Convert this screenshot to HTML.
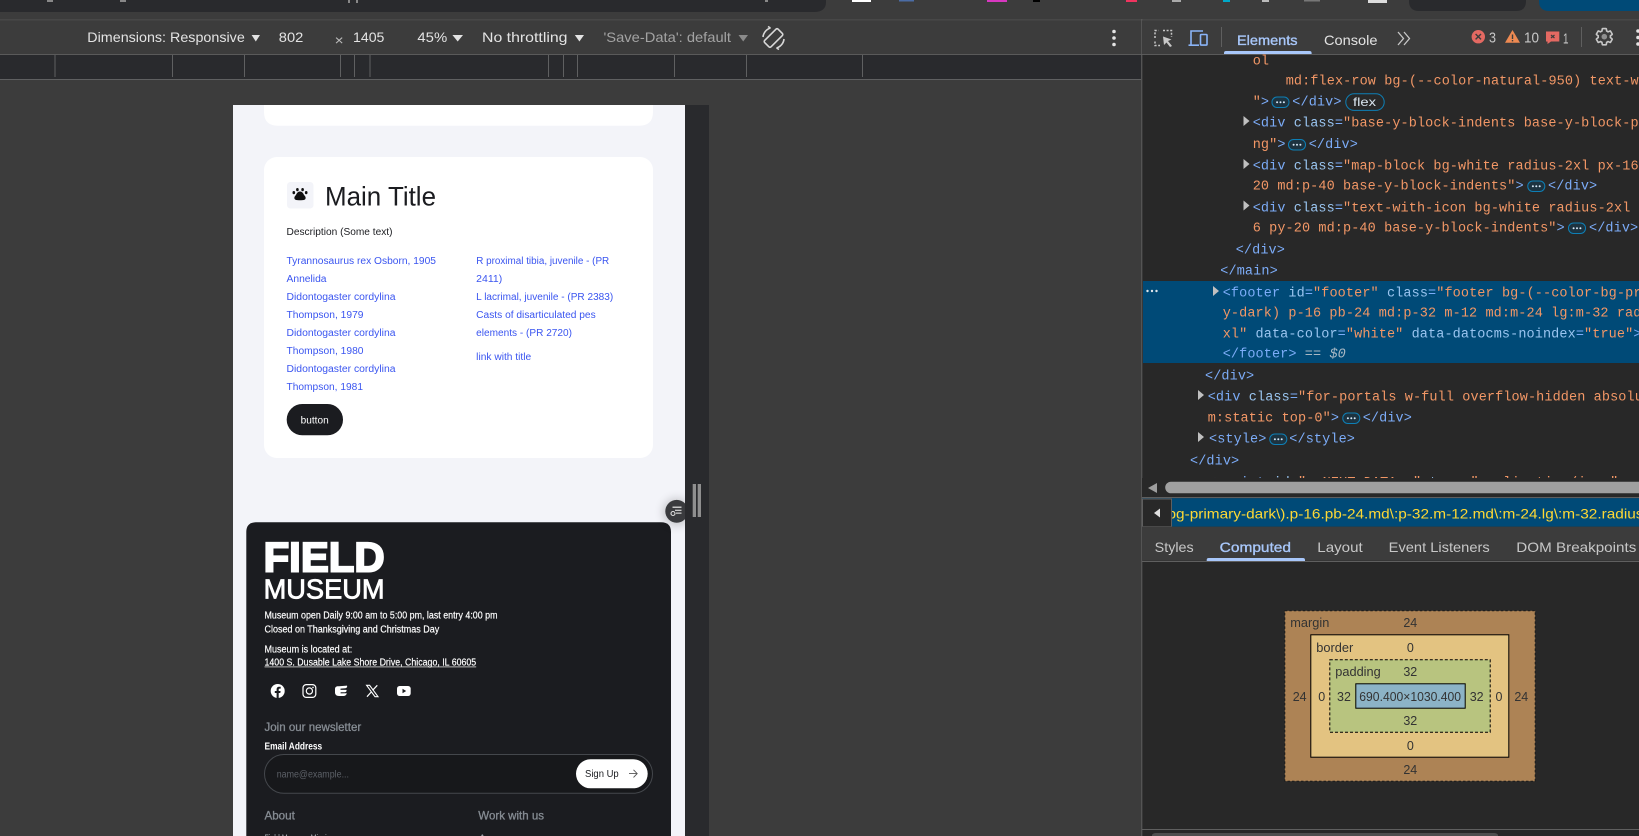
<!DOCTYPE html>
<html><head><meta charset="utf-8"><title>DevTools</title>
<style>
html,body{margin:0;padding:0;background:#3c3c3c;overflow:hidden}
svg{display:block}
text{font-family:"Liberation Sans",sans-serif;white-space:pre}
.m{font-family:"Liberation Mono",monospace;font-size:13.5px;letter-spacing:.11px}
.t{fill:#7cacf8}.a{fill:#9ac5f0}.v{fill:#f29766}
.s{font-size:10px}
.l{font-size:10px;fill:#3a55f0}
.w{font-size:10px;fill:#fff}
.f{stroke:#fff;stroke-width:.18px}
.g{font-size:12px;fill:#868c93;stroke:#868c93;stroke-width:.3px}
.u{font-size:14px;fill:#e3e3e3}
.b{font-size:12.5px;fill:#333}
</style></head>
<body>
<svg width="1639" height="836" viewBox="0 0 1639 836" xmlns="http://www.w3.org/2000/svg">
<defs>
<g id="bd"><rect x=".5" y="-5" width="17" height="10.5" rx="5" fill="#1d3340" stroke="#0e7fb5"/><circle cx="5.6" cy=".3" r="1" fill="#d5e6f5"/><circle cx="9" cy=".3" r="1" fill="#d5e6f5"/><circle cx="12.4" cy=".3" r="1" fill="#d5e6f5"/></g>
<path id="ar" d="M0-5 6 0 0 5Z" fill="#c0c0c0"/>
<filter id="sh" x="-60%" y="-60%" width="220%" height="220%"><feGaussianBlur stdDeviation="5"/></filter>
</defs>
<rect width="1639" height="836" fill="#3c3c3c"/>
<!-- top strip -->
<path d="M0 0H826V2Q826 12 814 12H0Z" fill="#292a2d"/>
<rect x="47" y="0" width="6" height="2" fill="#888"/><rect x="120" y="0" width="6" height="2" fill="#888"/><rect x="348" y="0" width="2" height="3" fill="#888"/><rect x="356" y="0" width="2" height="3" fill="#888"/><rect x="765" y="0" width="3" height="2" fill="#888"/>
<rect x="852" y="0" width="19" height="2" fill="#fff"/><rect x="899" y="0" width="15" height="1.5" fill="#4b6ca5"/><rect x="987" y="0" width="20" height="2" fill="#d838c0"/><rect x="1033" y="0" width="7" height="2" fill="#000"/><rect x="1126" y="0" width="11" height="2" fill="#f0345f"/><rect x="1172" y="0" width="9" height="2" fill="#aaa"/><rect x="1223" y="0" width="7" height="2" fill="#00a8c8"/><rect x="1262" y="0" width="7" height="2" fill="#bbb"/><rect x="1304" y="0" width="16" height="1.5" fill="#777"/><rect x="1368" y="0" width="19" height="3" fill="#ddd"/>
<path d="M1409 0H1526V1Q1526 11 1516 11H1419Q1409 11 1409 1Z" fill="#292a2d"/>
<path d="M1539 0H1639V11H1549Q1539 11 1539 1Z" fill="#004a77"/>
<rect x="0" y="19" width="1639" height="1.5" fill="#474747"/>

<!-- device toolbar -->
<text class="u" x="87.3" y="42" textLength="157.5" lengthAdjust="spacingAndGlyphs">Dimensions: Responsive</text>
<path d="M251.6 35H260L255.8 41.5Z" fill="#e3e3e3"/>
<text class="u" x="278.8" y="42" textLength="24.5" lengthAdjust="spacingAndGlyphs">802</text>
<text class="u" x="334.7" y="45" textLength="9" lengthAdjust="spacingAndGlyphs" style="fill:#bbb">×</text>
<text class="u" x="353" y="42" textLength="31.4" lengthAdjust="spacingAndGlyphs">1405</text>
<text class="u" x="417.4" y="42" textLength="29.8" lengthAdjust="spacingAndGlyphs">45%</text>
<path d="M452.4 35H463L457.7 41.5Z" fill="#e3e3e3"/>
<text class="u" x="482" y="42" textLength="85.5" lengthAdjust="spacingAndGlyphs">No throttling</text>
<path d="M574.8 35H584L579.4 41.5Z" fill="#e3e3e3"/>
<text class="u" x="603.5" y="42" textLength="127.5" lengthAdjust="spacingAndGlyphs" style="fill:#a3a3a3">'Save-Data': default</text>
<path d="M738.5 35H748L743.2 41.5Z" fill="#8a8a8a"/>
<g transform="translate(773.5 38)" fill="none" stroke="#d8d8d8" stroke-width="1.6"><rect x="-4.5" y="-9.5" width="9" height="19" rx="1.5" transform="rotate(45)"/><path d="M-10.5-1A10.5 10.5 0 0 1-3-10M-3-10-5.5-11.5M10.5 1A10.5 10.5 0 0 1 3 10M3 10 5.5 11.5"/></g>
<circle cx="1114" cy="31.5" r="1.8" fill="#e3e3e3"/><circle cx="1114" cy="38" r="1.8" fill="#e3e3e3"/><circle cx="1114" cy="44.5" r="1.8" fill="#e3e3e3"/>
<rect x="0" y="54" width="1639" height="1.2" fill="#5a5a5a"/>

<!-- ruler -->
<rect x="0" y="55" width="1141" height="24" fill="#292a2d"/>
<rect x="0" y="79" width="1141" height="1" fill="#5f6061"/>
<g fill="#5f6061">
<rect x="54.5" y="55" width="1" height="22"/><rect x="172" y="55" width="1" height="22"/><rect x="244" y="55" width="1" height="22"/><rect x="340" y="55" width="1" height="22"/><rect x="354" y="55" width="1" height="22"/><rect x="369.5" y="55" width="1" height="22"/><rect x="548" y="55" width="1" height="22"/><rect x="563" y="55" width="1" height="22"/><rect x="577" y="55" width="1" height="22"/><rect x="674" y="55" width="1" height="22"/><rect x="746" y="55" width="1" height="22"/><rect x="862" y="55" width="1" height="22"/>
</g>

<!-- emulated page -->
<rect x="233" y="105" width="452" height="731" fill="#f3f4f9"/>
<path d="M264 105H653V112Q653 125.7 639 125.7H278Q264 125.7 264 112Z" fill="#fff"/>
<rect x="264" y="157" width="389" height="301" rx="13" fill="#fff"/>
<rect x="287" y="182" width="26.5" height="26.5" rx="3.5" fill="#f3f4f9"/>
<g fill="#111"><path d="M300 191.5C297.4 191.5 296.6 194 295.6 195.4 294.5 196.6 294 197.6 294.6 199 295.3 200.3 297.2 200.2 300 200.2 302.8 200.2 304.7 200.3 305.4 199 306 197.6 305.5 196.6 304.4 195.4 303.4 194 302.6 191.5 300 191.5Z"/><ellipse cx="293.8" cy="192.6" rx="1.3" ry="1.6"/><ellipse cx="297.4" cy="189.6" rx="1.3" ry="1.6"/><ellipse cx="302.6" cy="189.6" rx="1.3" ry="1.6"/><ellipse cx="306.2" cy="192.6" rx="1.3" ry="1.6"/></g>
<text x="325" y="205.3" font-size="26.5" fill="#1b1c20" textLength="111" lengthAdjust="spacingAndGlyphs">Main Title</text>
<text class="s" x="286.5" y="235" fill="#1b1c20" textLength="106" lengthAdjust="spacingAndGlyphs">Description (Some text)</text>

<text class="l" x="286.5" y="264" textLength="149.5" lengthAdjust="spacingAndGlyphs">Tyrannosaurus rex Osborn, 1905</text>
<text class="l" x="286.5" y="282" textLength="40" lengthAdjust="spacingAndGlyphs">Annelida</text>
<text class="l" x="286.5" y="300" textLength="109" lengthAdjust="spacingAndGlyphs">Didontogaster cordylina</text>
<text class="l" x="286.5" y="318" textLength="77" lengthAdjust="spacingAndGlyphs">Thompson, 1979</text>
<text class="l" x="286.5" y="336" textLength="109" lengthAdjust="spacingAndGlyphs">Didontogaster cordylina</text>
<text class="l" x="286.5" y="354" textLength="77" lengthAdjust="spacingAndGlyphs">Thompson, 1980</text>
<text class="l" x="286.5" y="372" textLength="109" lengthAdjust="spacingAndGlyphs">Didontogaster cordylina</text>
<text class="l" x="286.5" y="390" textLength="76.5" lengthAdjust="spacingAndGlyphs">Thompson, 1981</text>

<text class="l" x="476.2" y="264" textLength="133" lengthAdjust="spacingAndGlyphs">R proximal tibia, juvenile - (PR</text>
<text class="l" x="476.2" y="282" textLength="26" lengthAdjust="spacingAndGlyphs">2411)</text>
<text class="l" x="476.2" y="300" textLength="137" lengthAdjust="spacingAndGlyphs">L lacrimal, juvenile - (PR 2383)</text>
<text class="l" x="476.2" y="318" textLength="119.5" lengthAdjust="spacingAndGlyphs">Casts of disarticulated pes</text>
<text class="l" x="476.2" y="336" textLength="95.8" lengthAdjust="spacingAndGlyphs">elements - (PR 2720)</text>
<text class="l" x="476.2" y="360" textLength="55" lengthAdjust="spacingAndGlyphs">link with title</text>

<rect x="286.7" y="404" width="56.3" height="31.3" rx="15.6" fill="#1b1c20"/>
<text class="w" x="300.7" y="423.5" textLength="28" lengthAdjust="spacingAndGlyphs">button</text>

<!-- footer -->
<path d="M246.3 836V532Q246.3 522.3 256 522.3H661Q671 522.3 671 532V836Z" fill="#1b1c20"/>
<text x="263.6" y="571.6" font-size="42" font-weight="bold" fill="#fff" stroke="#fff" stroke-width="2" textLength="121" lengthAdjust="spacingAndGlyphs">FIELD</text>
<text x="263.6" y="598.5" font-size="28.2" fill="#fff" stroke="#fff" stroke-width=".8" textLength="121" lengthAdjust="spacingAndGlyphs">MUSEUM</text>
<text class="w f" x="264.5" y="618.5" textLength="233" lengthAdjust="spacingAndGlyphs">Museum open Daily 9:00 am to 5:00 pm, last entry 4:00 pm</text>
<text class="w f" x="264.5" y="632.5" textLength="174.7" lengthAdjust="spacingAndGlyphs">Closed on Thanksgiving and Christmas Day</text>
<text class="w f" x="264.5" y="652.5" textLength="87.7" lengthAdjust="spacingAndGlyphs">Museum is located at:</text>
<text class="w f" x="264.5" y="665.5" textLength="211.7" lengthAdjust="spacingAndGlyphs">1400 S. Dusable Lake Shore Drive, Chicago, IL 60605</text>
<rect x="264.5" y="666.5" width="211.7" height=".8" fill="#ddd"/>
<!-- socials -->
<circle cx="277.7" cy="691" r="7" fill="#fff"/>
<path d="M276.6 698V693H274.8V691H276.6V689.4C276.6 687.6 277.7 686.7 279.2 686.7L280.7 686.8V688.6H279.7C278.9 688.6 278.7 689 278.7 689.6V691H280.6L280.3 693H278.7V698Z" fill="#1b1c20"/>
<g fill="none" stroke="#fff" stroke-width="1.2"><rect x="303" y="684.6" width="12.8" height="12.8" rx="3.3"/><circle cx="309.4" cy="691" r="3.1"/></g><circle cx="313" cy="687.4" r=".8" fill="#fff"/>
<path d="M335 689C335 686.6 337 686 339 686.3L347 685.6C347.5 687 346.8 688 345.3 688.2L340.5 688.6V689.9H346.5C346.8 691.4 346 692.2 344.8 692.2H340.6V693.4L346.8 693.2C346.4 695.2 345 696 343 696H339C336.5 696 335 694.6 335 692.5Z" fill="#fff"/>
<path d="M366.6 685.3H369.6L378 696.7H375Z" fill="none" stroke="#fff" stroke-width="1.1"/><path d="M377.3 685.3 372.6 690.3M367 696.7 371.6 691.6" stroke="#fff" stroke-width="1.2"/>
<rect x="397" y="686" width="13.7" height="10" rx="2.6" fill="#fff"/><path d="M402.5 688.8V693.2L406.2 691Z" fill="#1b1c20"/>

<text class="g" x="264.5" y="731" textLength="96.7" lengthAdjust="spacingAndGlyphs">Join our newsletter</text>
<text class="w" x="264.5" y="749.3" font-weight="bold" textLength="57.7" lengthAdjust="spacingAndGlyphs">Email Address</text>
<rect x="264.5" y="754.5" width="388" height="38.8" rx="19.4" fill="#17181b" stroke="#44474c"/>
<text class="s" x="276.7" y="777.5" style="fill:#5c6067" textLength="72.3" lengthAdjust="spacingAndGlyphs">name@example...</text>
<rect x="576" y="759.3" width="71.7" height="29" rx="14.5" fill="#fff"/>
<text class="s" x="585" y="777" fill="#1b1c20" textLength="33.7" lengthAdjust="spacingAndGlyphs">Sign Up</text>
<path d="M629 773.6H637M633.5 769.8 637.2 773.6 633.5 777.4" fill="none" stroke="#555" stroke-width=".9"/>
<text class="g" x="264.5" y="819.3" textLength="30.3" lengthAdjust="spacingAndGlyphs">About</text>
<text class="g" x="478.3" y="819.3" textLength="65.7" lengthAdjust="spacingAndGlyphs">Work with us</text>
<text class="s" x="264.5" y="841.5" fill="#aab0b6" textLength="70" lengthAdjust="spacingAndGlyphs">Field Museum Mission</text>
<text class="s" x="479" y="841.5" fill="#aab0b6">A</text>

<!-- floating button + gutter -->
<circle cx="676.7" cy="512" r="13" fill="#000" opacity=".22" filter="url(#sh)"/>
<circle cx="676.7" cy="511.3" r="11.4" fill="#3a3b3e"/>
<g fill="#c8c8c8"><rect x="672.5" y="506.5" width="9" height="1.5"/><rect x="675" y="509.7" width="6.5" height="1.3"/><rect x="676" y="512.5" width="5.5" height="1.3"/></g><circle cx="673" cy="513.5" r="2" fill="none" stroke="#e0e0e0" stroke-width="1.1"/>
<rect x="685" y="105" width="24" height="731" fill="#292a2d"/>
<rect x="692.7" y="484" width="3.3" height="33" fill="#8f8f8f"/><rect x="697.7" y="484" width="3.3" height="33" fill="#8f8f8f"/>

<!-- devtools panel -->
<rect x="1142" y="55" width="497" height="781" fill="#282828"/>
<rect x="1141.3" y="19" width="1" height="817" fill="#5f5f5f"/>
<rect x="1142" y="20.5" width="497" height="33.5" fill="#3c3c3c"/>
<!-- inspect -->
<g fill="none" stroke="#c7c7c7" stroke-width="1.5"><path d="M1163 30.5H1171.5V37M1155 38V30.5H1158.5M1155 41.5V45.5H1160" stroke-dasharray="2 1.6"/></g>
<path d="M1163 36.5 1171.5 39.5 1168 41 1172 46 1170 47 1166.5 42.5 1164 45Z" fill="#c7c7c7"/>
<!-- device -->
<g fill="none" stroke="#8ab4f8" stroke-width="1.6"><path d="M1191 44.5V31H1203M1188.5 45.2H1199"/><rect x="1200.5" y="34.5" width="6.5" height="10.6" rx=".8"/></g>
<rect x="1221" y="27" width="1" height="20" fill="#5f5f5f"/>
<text x="1237" y="45" font-size="14" fill="#a8c7fa" stroke="#a8c7fa" stroke-width=".35" textLength="60.5" lengthAdjust="spacingAndGlyphs">Elements</text>
<text class="u" x="1324" y="45" textLength="53.5" lengthAdjust="spacingAndGlyphs">Console</text>
<path d="M1398 32 1403.5 38.5 1398 45M1404 32 1409.5 38.5 1404 45" fill="none" stroke="#c7c7c7" stroke-width="1.3"/>
<path d="M1224 54V53Q1224 51 1226 51H1309.6Q1311.6 51 1311.6 53V54Z" fill="#a8c7fa"/>
<circle cx="1478.3" cy="36.7" r="6.7" fill="#e46962"/><path d="M1475.6 34 1481 39.4M1481 34 1475.6 39.4" stroke="#3c3c3c" stroke-width="1.4"/>
<text class="u" x="1489" y="42.5" style="fill:#c7c7c7;font-size:15px" textLength="7" lengthAdjust="spacingAndGlyphs">3</text>
<path d="M1512.5 30 1520 42.7H1505Z" fill="#ee8a52"/><rect x="1511.8" y="34.5" width="1.4" height="4.5" fill="#3c3c3c"/><rect x="1511.8" y="40" width="1.4" height="1.4" fill="#3c3c3c"/>
<text class="u" x="1524" y="42.5" style="fill:#c7c7c7;font-size:15px" textLength="15" lengthAdjust="spacingAndGlyphs">10</text>
<path d="M1546 31.5H1559.3V41.5H1551L1547.5 44V41.5H1546Z" fill="#e46962"/><path d="M1551 35 1554.5 38M1554.5 35 1551 38" stroke="#3c3c3c" stroke-width="1.2"/>
<text class="u" x="1563" y="43.5" style="fill:#c7c7c7;font-size:15px" textLength="5.5" lengthAdjust="spacingAndGlyphs">1</text>
<rect x="1581" y="27" width="1" height="20" fill="#5f5f5f"/>
<path transform="translate(1594.1 26.5) scale(.85)" fill="none" stroke="#c7c7c7" stroke-width="1.9" d="M19.14 12.94c.04-.3.06-.61.06-.94 0-.32-.02-.64-.07-.94l2.03-1.58c.18-.14.23-.41.12-.61l-1.92-3.32c-.12-.22-.37-.29-.59-.22l-2.39.96c-.5-.38-1.03-.7-1.62-.94l-.36-2.54c-.04-.24-.24-.41-.48-.41h-3.84c-.24 0-.43.17-.47.41l-.36 2.54c-.59.24-1.13.57-1.62.94l-2.39-.96c-.22-.08-.47 0-.59.22L2.74 8.87c-.12.21-.08.47.12.61l2.03 1.58c-.05.3-.09.63-.09.94s.02.64.07.94l-2.03 1.58c-.18.14-.23.41-.12.61l1.92 3.32c.12.22.37.29.59.22l2.39-.96c.5.38 1.03.7 1.62.94l.36 2.54c.05.24.24.41.48.41h3.84c.24 0 .44-.17.47-.41l.36-2.54c.59-.24 1.13-.56 1.62-.94l2.39.96c.22.08.47 0 .59-.22l1.92-3.32c.12-.22.07-.47-.12-.61l-2.01-1.58z"/>
<circle cx="1604.3" cy="36.7" r="2.8" fill="#8f8f8f"/>
<circle cx="1638" cy="31" r="1.8" fill="#e3e3e3"/><circle cx="1638" cy="37.5" r="1.8" fill="#e3e3e3"/><circle cx="1638" cy="44" r="1.8" fill="#e3e3e3"/>

<!-- selected row -->
<rect x="1143" y="281" width="496" height="82" fill="#004a77"/>

<text class="m v" x="1252.7" y="64.7">ol</text>
<text class="m v" x="1285.7" y="84.7">md:flex-row bg-(--color-natural-950) text-w</text>
<text class="m" x="1252.7" y="105.7"><tspan class="v">"</tspan><tspan class="t">&gt;</tspan></text>
<use href="#bd" x="1271.5" y="102"/>
<text class="m t" x="1292.3" y="105.7">&lt;/div&gt;</text>
<rect x="1345.8" y="93.8" width="38.4" height="16.6" rx="8.3" fill="none" stroke="#0e7fb5"/>
<text x="1353" y="106" font-size="12" fill="#d8e4ee" textLength="23" lengthAdjust="spacingAndGlyphs">flex</text>

<use href="#ar" x="1243.5" y="121"/>
<text class="m" x="1252.7" y="126.7"><tspan class="t">&lt;div</tspan> <tspan class="a">class</tspan><tspan class="t">=</tspan><tspan class="v">"base-y-block-indents base-y-block-p</tspan></text>
<text class="m" x="1252.7" y="148"><tspan class="v">ng"</tspan><tspan class="t">&gt;</tspan></text>
<use href="#bd" x="1288" y="144.5"/>
<text class="m t" x="1308.7" y="148">&lt;/div&gt;</text>

<use href="#ar" x="1243.5" y="164"/>
<text class="m" x="1252.7" y="169.7"><tspan class="t">&lt;div</tspan> <tspan class="a">class</tspan><tspan class="t">=</tspan><tspan class="v">"map-block bg-white radius-2xl px-16</tspan></text>
<text class="m" x="1252.7" y="189.7"><tspan class="v">20 md:p-40 base-y-block-indents"</tspan><tspan class="t">&gt;</tspan></text>
<use href="#bd" x="1527.3" y="186"/>
<text class="m t" x="1548" y="189.7">&lt;/div&gt;</text>

<use href="#ar" x="1243.5" y="205.5"/>
<text class="m" x="1252.7" y="211.3"><tspan class="t">&lt;div</tspan> <tspan class="a">class</tspan><tspan class="t">=</tspan><tspan class="v">"text-with-icon bg-white radius-2xl</tspan></text>
<text class="m" x="1252.7" y="231.3"><tspan class="v">6 py-20 md:p-40 base-y-block-indents"</tspan><tspan class="t">&gt;</tspan></text>
<use href="#bd" x="1568" y="228"/>
<text class="m t" x="1589" y="231.3">&lt;/div&gt;</text>

<text class="m t" x="1235.7" y="253.3">&lt;/div&gt;</text>
<text class="m t" x="1220.3" y="274.7">&lt;/main&gt;</text>

<circle cx="1147.5" cy="291" r="1.2" fill="#dfe6ec"/><circle cx="1152" cy="291" r="1.2" fill="#dfe6ec"/><circle cx="1156.5" cy="291" r="1.2" fill="#dfe6ec"/>
<use href="#ar" x="1213" y="291"/>
<text class="m" x="1222.7" y="296.3"><tspan class="t">&lt;footer</tspan> <tspan class="a">id</tspan><tspan class="t">=</tspan><tspan class="v">"footer"</tspan> <tspan class="a">class</tspan><tspan class="t">=</tspan><tspan class="v">"footer bg-(--color-bg-pr</tspan></text>
<text class="m v" x="1222.7" y="316.3">y-dark) p-16 pb-24 md:p-32 m-12 md:m-24 lg:m-32 rad</text>
<text class="m" x="1222.7" y="337.3"><tspan class="v">xl"</tspan> <tspan class="a">data-color</tspan><tspan class="t">=</tspan><tspan class="v">"white"</tspan> <tspan class="a">data-datocms-noindex</tspan><tspan class="t">=</tspan><tspan class="v">"true"</tspan><tspan class="t">&gt;</tspan></text>
<text class="m" x="1222.7" y="357.3"><tspan class="t">&lt;/footer&gt;</tspan><tspan fill="#a9b8c4"> == </tspan><tspan fill="#a9b8c4" font-style="italic">$0</tspan></text>

<text class="m t" x="1205" y="379.7">&lt;/div&gt;</text>
<use href="#ar" x="1198" y="395"/>
<text class="m" x="1207.7" y="400.7"><tspan class="t">&lt;div</tspan> <tspan class="a">class</tspan><tspan class="t">=</tspan><tspan class="v">"for-portals w-full overflow-hidden absolu</tspan></text>
<text class="m" x="1207.7" y="421.7"><tspan class="v">m:static top-0"</tspan><tspan class="t">&gt;</tspan></text>
<use href="#bd" x="1342.3" y="418"/>
<text class="m t" x="1362.7" y="421.7">&lt;/div&gt;</text>
<use href="#ar" x="1198" y="437"/>
<text class="m t" x="1209" y="442.7">&lt;style&gt;</text>
<use href="#bd" x="1269.3" y="439"/>
<text class="m t" x="1289.3" y="442.7">&lt;/style&gt;</text>
<text class="m t" x="1190" y="464.7">&lt;/div&gt;</text>
<text class="m" x="1207.7" y="486"><tspan class="t">&lt;script</tspan> <tspan class="a">id</tspan><tspan class="t">=</tspan><tspan class="v">"__NEXT_DATA__"</tspan> <tspan class="a">type</tspan><tspan class="t">=</tspan><tspan class="v">"application/json"</tspan></text>

<!-- h-scrollbar -->
<rect x="1142" y="478" width="497" height="19" fill="#282828"/>
<path d="M1157 483V493L1148 488Z" fill="#9e9e9e"/>
<path d="M1171 481.7H1639V493.3H1171A5.8 5.8 0 0 1 1171 481.7Z" fill="#a0a0a0"/>
<rect x="1142" y="497" width="497" height="1.2" fill="#5f5f5f"/>

<!-- breadcrumbs -->
<rect x="1142" y="498.2" width="497" height="28.5" fill="#004a77"/>
<text x="1167.5" y="518.5" font-size="14" fill="#fdd835" textLength="476" lengthAdjust="spacingAndGlyphs">bg-primary-dark\).p-16.pb-24.md\:p-32.m-12.md\:m-24.lg\:m-32.radius</text>
<rect x="1142.5" y="499" width="29" height="27.7" fill="#282828" stroke="#5f5f5f"/>
<path d="M1160 508.5V517.5L1154 513Z" fill="#e0e0e0"/>
<rect x="1142" y="526.7" width="497" height="34" fill="#3c3c3c"/>
<text class="u" x="1154.7" y="552" style="fill:#c7c7c7" textLength="39" lengthAdjust="spacingAndGlyphs">Styles</text>
<text x="1219.7" y="552" font-size="14" fill="#a8c7fa" stroke="#a8c7fa" stroke-width=".35" textLength="71.3" lengthAdjust="spacingAndGlyphs">Computed</text>
<text class="u" x="1317.3" y="552" style="fill:#c7c7c7" textLength="45.4" lengthAdjust="spacingAndGlyphs">Layout</text>
<text class="u" x="1388.7" y="552" style="fill:#c7c7c7" textLength="101" lengthAdjust="spacingAndGlyphs">Event Listeners</text>
<text class="u" x="1516.3" y="552" style="fill:#c7c7c7" textLength="120" lengthAdjust="spacingAndGlyphs">DOM Breakpoints</text>
<path d="M1206.7 561V560Q1206.7 558 1208.7 558H1303Q1305 558 1305 560V561Z" fill="#a8c7fa"/>
<rect x="1142" y="561" width="497" height="1" fill="#5f5f5f"/>

<!-- box model -->
<rect x="1284.8" y="610.8" width="250.4" height="170.4" fill="#ad8355" stroke="#1b1b1b" stroke-dasharray="2.5 2"/>
<rect x="1310.8" y="634.8" width="198" height="122.4" fill="#e3c381" stroke="#000"/>
<rect x="1329.8" y="659.8" width="160.4" height="72.4" fill="#b8c47f" stroke="#000" stroke-dasharray="3 2"/>
<rect x="1355.8" y="683.8" width="109.4" height="24.4" fill="#8cb3c6" stroke="#000"/>
<text class="b" x="1290.3" y="627" textLength="39" lengthAdjust="spacingAndGlyphs">margin</text>
<text class="b" x="1410.3" y="627" text-anchor="middle">24</text>
<text class="b" x="1410.3" y="774" text-anchor="middle">24</text>
<text class="b" x="1299.7" y="701" text-anchor="middle">24</text>
<text class="b" x="1521.3" y="701" text-anchor="middle">24</text>
<text class="b" x="1316.3" y="652" textLength="37" lengthAdjust="spacingAndGlyphs">border</text>
<text class="b" x="1410.3" y="652" text-anchor="middle">0</text>
<text class="b" x="1410.3" y="750" text-anchor="middle">0</text>
<text class="b" x="1321.7" y="701" text-anchor="middle">0</text>
<text class="b" x="1499" y="701" text-anchor="middle">0</text>
<text class="b" x="1335.3" y="676" textLength="45.4" lengthAdjust="spacingAndGlyphs">padding</text>
<text class="b" x="1410.3" y="676" text-anchor="middle">32</text>
<text class="b" x="1410.3" y="725" text-anchor="middle">32</text>
<text class="b" x="1344" y="701" text-anchor="middle">32</text>
<text class="b" x="1476.7" y="701" text-anchor="middle">32</text>
<text class="b" x="1359.3" y="701" textLength="101.7" lengthAdjust="spacingAndGlyphs">690.400×1030.400</text>

<!-- bottom scrollbar -->
<rect x="1142" y="829" width="497" height="1" fill="#5f5f5f"/>
<path d="M1152 836V835Q1153 833 1156 833H1494Q1497 833 1498 835V836Z" fill="#4f4f4f"/>
</svg>
</body></html>
